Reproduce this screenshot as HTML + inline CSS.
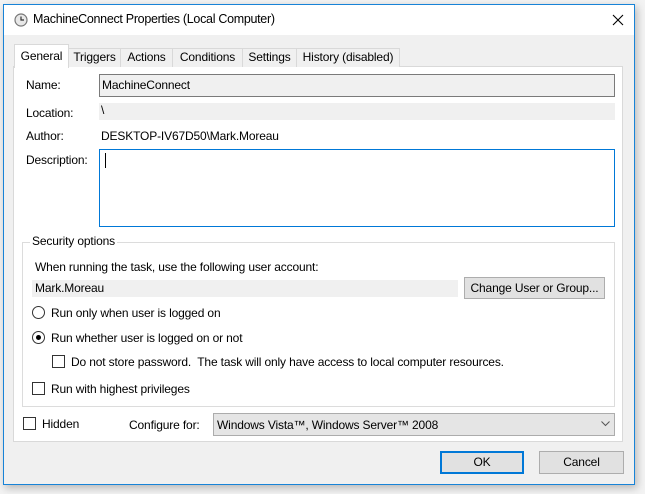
<!DOCTYPE html>
<html><head><style>
*{box-sizing:border-box;margin:0;padding:0}
body{width:645px;height:494px;background:#f3f3f3;font-family:"Liberation Sans",sans-serif;font-size:12px;letter-spacing:-0.15px;color:#000;position:relative;overflow:hidden}
.a{position:absolute;white-space:nowrap}
.win{left:3px;top:4px;width:632px;height:481px;border:1px solid #1883d7;background:#f0f0f0;box-shadow:2px 3px 8px rgba(0,0,0,.25)}
.title{left:4px;top:5px;width:630px;height:30px;background:#fff}
.tab{top:48px;height:19px;border:1px solid #d9d9d9;border-bottom:none;background:#f0f0f0;text-align:center;line-height:17px;font-size:12px}
.page{left:13px;top:66px;width:610px;height:376px;background:#fff;border:1px solid #d9d9d9}
.cb{width:13px;height:13px;border:1px solid #333;background:#fff}
.rb{width:13px;height:13px;border:1px solid #333;border-radius:50%;background:#fff}
.btn{background:#e1e1e1;border:1px solid #adadad;text-align:center}
</style></head><body>
<div class="a win"></div>
<div class="a title"></div>
<svg class="a" style="left:14px;top:13px" width="14" height="14" viewBox="0 0 14 14"><circle cx="7" cy="7" r="6" fill="#e8e8e8" stroke="#777" stroke-width="1.2"/><path d="M7 3.5V7h3" stroke="#333" fill="none" stroke-width="1.2"/></svg>
<div class="a" style="left:33px;top:12px;font-size:12.5px;letter-spacing:-0.3px">MachineConnect Properties (Local Computer)</div>
<svg class="a" style="left:612px;top:14px" width="12" height="12" viewBox="0 0 12 12"><path d="M1 1L11 11M11 1L1 11" stroke="#000" stroke-width="1.1"/></svg>

<div class="a page"></div>
<div class="a tab" style="left:68px;width:53px">Triggers</div>
<div class="a tab" style="left:120px;width:53px">Actions</div>
<div class="a tab" style="left:172px;width:71px">Conditions</div>
<div class="a tab" style="left:242px;width:55px">Settings</div>
<div class="a tab" style="left:296px;width:104px">History (disabled)</div>
<div class="a tab" style="left:14px;top:44px;width:55px;height:24px;background:#fff;line-height:22px">General</div>

<div class="a" style="left:26px;top:78px">Name:</div>
<div class="a" style="left:99px;top:74px;width:516px;height:23px;border:1px solid #7a7a7a;background:#f0f0f0;padding:3px 2px">MachineConnect</div>
<div class="a" style="left:26px;top:106px">Location:</div>
<div class="a" style="left:99px;top:103px;width:516px;height:17px;background:#f0f0f0;padding:0 2px">\</div>
<div class="a" style="left:26px;top:129px">Author:</div>
<div class="a" style="left:101px;top:129px">DESKTOP-IV67D50\Mark.Moreau</div>
<div class="a" style="left:26px;top:153px">Description:</div>
<div class="a" style="left:99px;top:149px;width:516px;height:78px;border:1px solid #0078d7;background:#fff"></div>
<div class="a" style="left:105px;top:153px;width:1px;height:15px;background:#000"></div>

<div class="a" style="left:22px;top:242px;width:593px;height:165px;border:1px solid #dcdcdc"></div>
<div class="a" style="left:30px;top:234px;background:#fff;padding:0 2px">Security options</div>
<div class="a" style="left:35px;top:260px">When running the task, use the following user account:</div>
<div class="a" style="left:32px;top:280px;width:426px;height:17px;background:#f0f0f0;padding:1px 3px">Mark.Moreau</div>
<div class="a btn" style="left:464px;top:277px;width:141px;height:22px;line-height:20px">Change User or Group...</div>
<div class="a rb" style="left:32px;top:306px"></div>
<div class="a" style="left:51px;top:306px">Run only when user is logged on</div>
<div class="a rb" style="left:32px;top:331px"></div>
<div class="a" style="left:36px;top:335px;width:5px;height:5px;border-radius:50%;background:#000"></div>
<div class="a" style="left:51px;top:331px">Run whether user is logged on or not</div>
<div class="a cb" style="left:52px;top:355px"></div>
<div class="a" style="left:71px;top:355px">Do not store password.&nbsp; The task will only have access to local computer resources.</div>
<div class="a cb" style="left:32px;top:382px"></div>
<div class="a" style="left:51px;top:382px">Run with highest privileges</div>

<div class="a cb" style="left:23px;top:417px"></div>
<div class="a" style="left:42px;top:417px">Hidden</div>
<div class="a" style="left:129px;top:418px">Configure for:</div>
<div class="a" style="left:213px;top:413px;width:402px;height:23px;background:#e5e5e5;border:1px solid #acacac;padding:4px 3px">Windows Vista™, Windows Server™ 2008</div>
<svg class="a" style="left:601px;top:421px" width="9" height="6" viewBox="0 0 9 6"><path d="M.5 .5L4.5 4.5L8.5 .5" stroke="#555" fill="none"/></svg>

<div class="a btn" style="left:440px;top:451px;width:84px;height:23px;line-height:19px;border:2px solid #0078d7">OK</div>
<div class="a btn" style="left:539px;top:451px;width:85px;height:23px;line-height:21px">Cancel</div>
</body></html>
